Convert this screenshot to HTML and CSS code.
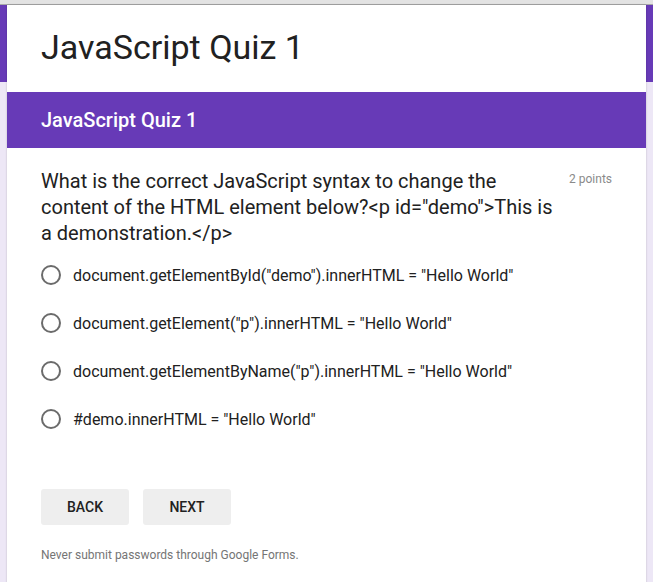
FILE: index.html
```html
<!DOCTYPE html>
<html>
<head>
<meta charset="utf-8">
<link rel="stylesheet" href="styles.css">
</head>
<body>
<div class="topbar"></div>
<div class="page">
  <div class="band"></div>
  <div class="card">
    <div class="title-area">
      <h1 class="title">JavaScript Quiz 1</h1>
    </div>
    <div class="section">JavaScript Quiz 1</div>
    <div class="body">
      <div class="question">
        <div class="qtext">What is the correct JavaScript syntax to change the content of the HTML element below?&lt;p id="demo"&gt;This is a demonstration.&lt;/p&gt;</div>
        <div class="points">2 points</div>
      </div>
      <div class="options">
        <label class="option"><span class="radio"></span><span>document.getElementById("demo").innerHTML = "Hello World"</span></label>
        <label class="option"><span class="radio"></span><span>document.getElement("p").innerHTML = "Hello World"</span></label>
        <label class="option"><span class="radio"></span><span>document.getElementByName("p").innerHTML = "Hello World"</span></label>
        <label class="option"><span class="radio"></span><span>#demo.innerHTML = "Hello World"</span></label>
      </div>
      <div class="buttons">
        <button class="btn">BACK</button>
        <button class="btn">NEXT</button>
      </div>
      <div class="footer">Never submit passwords through Google Forms.</div>
    </div>
  </div>
</div>
</body>
</html>
```

FILE: styles.css
```css
html, body {
  margin: 0;
  padding: 0;
}
body {
  background: #ede7f6;
  font-family: Roboto, "Liberation Sans", sans-serif;
  color: #212121;
  overflow: hidden;
}
.topbar {
  height: 4px;
  background: #e3e3e3;
  border-bottom: 1px solid #a8a8a8;
}
.page {
  position: relative;
  padding: 0 7px;
}
.band {
  position: absolute;
  left: 0;
  right: 0;
  top: 0;
  height: 77px;
  background: #673ab7;
}
.card {
  position: relative;
  background: #fff;
  box-shadow: 0 0 2px rgba(0,0,0,0.2);
}
.title-area {
  height: 87px;
  padding: 0 34px;
  display: flex;
  align-items: center;
}
.title {
  margin: 0;
  font-size: 34px;
  font-weight: 400;
  line-height: 40px;
  color: #212121;
  padding-bottom: 4px;
}
.section {
  background: #673ab7;
  color: #fff;
  height: 56px;
  display: flex;
  align-items: center;
  padding: 0 34px;
  font-size: 20px;
  font-weight: 500;
}
.body {
  padding: 20px 34px 40px;
}
.question {
  display: flex;
  justify-content: space-between;
  align-items: flex-start;
}
.qtext {
  width: 516px;
  font-size: 20px;
  line-height: 26px;
  color: #212121;
}
.points {
  font-size: 12px;
  color: #8a8a8a;
  padding-top: 4px;
}
.options {
  display: flex;
  flex-direction: column;
  margin-top: 5px;
}
.option {
  display: flex;
  align-items: center;
  height: 48px;
  font-size: 16px;
  color: #212121;
}
.radio {
  width: 16px;
  height: 16px;
  border: 2px solid #6b6b6b;
  border-radius: 50%;
  margin-right: 12px;
  flex: none;
}
.buttons {
  display: flex;
  gap: 14px;
  margin-top: 46px;
}
.btn {
  width: 88px;
  height: 36px;
  border: none;
  border-radius: 3px;
  background: #eeeeee;
  font-family: Roboto, "Liberation Sans", sans-serif;
  font-size: 14px;
  font-weight: 500;
  color: #212121;
  padding: 0;
}
.footer {
  margin-top: 23px;
  font-size: 12px;
  color: #757575;
}
```
